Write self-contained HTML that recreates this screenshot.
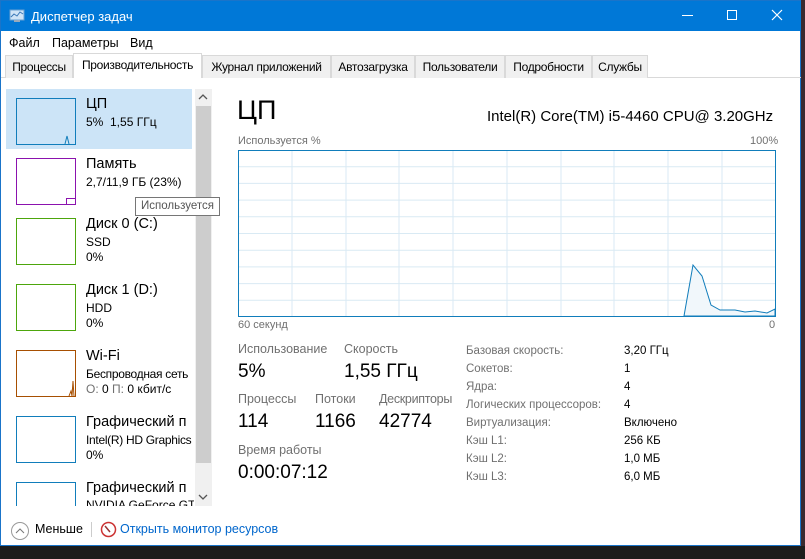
<!DOCTYPE html>
<html><head><meta charset="utf-8"><style>
*{margin:0;padding:0;box-sizing:border-box}
body{width:805px;height:559px;overflow:hidden;background:#222;font-family:"Liberation Sans",sans-serif;position:relative;color:#000}
.a{position:absolute;white-space:nowrap}
.win{position:absolute;left:0;top:0;width:801px;height:546px;background:#fff;border:1px solid #1a74c9}
.g{color:#707070}
.tab{position:absolute;top:54px;height:23px;font-size:12px;letter-spacing:-0.3px;padding:4px 0 0;text-align:center;white-space:nowrap;overflow:hidden;background:#f0f0f0;border:1px solid #d9d9d9;border-bottom:none}
.th{position:absolute;left:15px;width:60px;height:47px;border:1px solid}
.lt{font-size:14.5px}
.ls{font-size:12px}
</style></head><body>
<div class="a" style="left:801px;top:0;width:4px;height:559px;background:#3a2a30"></div>
<div class="a" style="left:0;top:546px;width:805px;height:13px;background:#1c1c1c"></div>
<div class="win">
<div class="a" style="left:0;top:0;width:800px;height:30px;background:#0078d7"></div>
<svg class="a" style="left:8px;top:7px" width="16" height="16"><rect x="1" y="2" width="14" height="10" fill="#cfe4f7" stroke="#6aa0d0"/><polyline points="2,9 5,6 8,8 11,4 14,6" fill="none" stroke="#3a78b8"/><rect x="5" y="12" width="6" height="2" fill="#9ab"/></svg>
<div class="a" style="left:30px;top:8px;font-size:13px;color:#fff">Диспетчер задач</div>
<div class="a" style="left:681px;top:14px;width:11px;height:1px;background:#fff"></div>
<div class="a" style="left:726px;top:9px;width:10px;height:10px;border:1px solid #fff"></div>
<svg class="a" style="left:770px;top:8px" width="12" height="12"><path d="M1 1L11 11M11 1L1 11" stroke="#fff" stroke-width="1.2"/></svg>
<div class="a" style="left:8px;top:35px;font-size:12.5px">Файл</div>
<div class="a" style="left:51px;top:35px;font-size:12.5px">Параметры</div>
<div class="a" style="left:129px;top:35px;font-size:12.5px">Вид</div>
<div class="a" style="left:0;top:76px;width:800px;height:1px;background:#d9d9d9"></div>
<div class="tab" style="left:4px;width:68px">Процессы</div>
<div class="tab" style="left:72px;top:52px;height:25px;width:129px;background:#fff;border-color:#d9d9d9">Производительность</div>
<div class="tab" style="left:201px;width:129px">Журнал приложений</div>
<div class="tab" style="left:330px;width:84px">Автозагрузка</div>
<div class="tab" style="left:414px;width:90px">Пользователи</div>
<div class="tab" style="left:504px;width:87px">Подробности</div>
<div class="tab" style="left:591px;width:56px">Службы</div>

<div class="a" style="left:5px;top:88px;width:186px;height:60px;background:#cce4f7"></div>
<div class="th" style="top:97px;border-color:#117dbb"><svg width="58" height="45" style="position:absolute;left:0;top:0"><polyline points="48,45 50,37 52,45" fill="#d4e8f5" stroke="#117dbb"/></svg></div>
<div class="a lt" style="left:85px;top:95px">ЦП</div>
<div class="a ls" style="left:85px;top:114px">5%&nbsp; 1,55 ГГц</div>
<div class="th" style="top:157px;border-color:#8b12ae"><div style="position:absolute;right:0;bottom:0;width:9px;height:6px;border:1px solid #8b12ae;border-right:none;border-bottom:none"></div></div>
<div class="a lt" style="left:85px;top:155px">Память</div>
<div class="a ls" style="left:85px;top:174px">2,7/11,9 ГБ (23%)</div>
<div class="th" style="top:217px;border-color:#4da60c"></div>
<div class="a lt" style="left:85px;top:215px">Диск 0 (C:)</div>
<div class="a ls" style="left:85px;top:234px">SSD</div>
<div class="a ls" style="left:85px;top:249px">0%</div>
<div class="th" style="top:283px;border-color:#4da60c"></div>
<div class="a lt" style="left:85px;top:281px">Диск 1 (D:)</div>
<div class="a ls" style="left:85px;top:300px">HDD</div>
<div class="a ls" style="left:85px;top:315px">0%</div>
<div class="th" style="top:349px;border-color:#a74f01"><svg width="58" height="45" style="position:absolute;left:0;top:0"><polyline points="52,45 54,40 55,45 56,30 57,45" fill="none" stroke="#a74f01"/></svg></div>
<div class="a lt" style="left:85px;top:347px">Wi-Fi</div>
<div class="a ls" style="left:85px;top:366px;letter-spacing:-0.3px">Беспроводная сеть</div>
<div class="a ls g" style="left:85px;top:381px">О: <span style="color:#000">0</span> П: <span style="color:#000">0 кбит/с</span></div>
<div class="th" style="top:415px;border-color:#117dbb"></div>
<div class="a lt" style="left:85px;top:413px;width:108px;overflow:hidden">Графический п</div>
<div class="a ls" style="left:85px;top:432px;width:108px;overflow:hidden;letter-spacing:-0.3px">Intel(R) HD Graphics</div>
<div class="a ls" style="left:85px;top:447px">0%</div>
<div class="th" style="top:481px;height:24px;border-bottom:none;border-color:#117dbb"></div>
<div class="a lt" style="left:85px;top:479px;width:108px;overflow:hidden">Графический п</div>
<div class="a ls" style="left:85px;top:497px;width:108px;height:8px;overflow:hidden">NVIDIA GeForce GTX</div>
<div class="a" style="left:194px;top:88px;width:17px;height:417px;background:#f0f0f0"></div>
<div class="a" style="left:195px;top:105px;width:15px;height:357px;background:#cdcdcd"></div>
<svg class="a" style="left:197px;top:92px" width="10" height="8"><path d="M1 6L5 2L9 6" fill="none" stroke="#555" stroke-width="1.3"/></svg>
<svg class="a" style="left:197px;top:492px" width="10" height="8"><path d="M1 2L5 6L9 2" fill="none" stroke="#555" stroke-width="1.3"/></svg>
<div class="a" style="left:134px;top:196px;height:19px;border:1px solid #767676;background:#fff;font-size:11.5px;padding:2px 5px;color:#555;z-index:5">Используется</div>

<div class="a" style="left:236px;top:94px;font-size:27px">ЦП</div>
<div class="a" style="left:486px;top:107px;font-size:15px">Intel(R) Core(TM) i5-4460 CPU@ 3.20GHz</div>
<div class="a g" style="left:237px;top:134px;font-size:11px">Используется %</div>
<div class="a g" style="left:749px;top:134px;font-size:11px">100%</div>
<svg class="a" style="left:237px;top:149px" width="538" height="167">
<g stroke="#d9eaf4" stroke-width="1">
<path d="M54 0V167M108 0V167M161 0V167M215 0V167M269 0V167M323 0V167M376 0V167M430 0V167M484 0V167M0 16.7H538M0 33.4H538M0 50.1H538M0 66.8H538M0 83.5H538M0 100.2H538M0 116.9H538M0 133.6H538M0 150.3H538"/>
</g>
<polygon points="446,166 455,115 464,126 473,155 482,160 497,160 507,162 517,161 529,163 537,159 537,166" fill="#f1f7fb" stroke="#117dbb" stroke-width="1"/>
<rect x="0.5" y="0.5" width="537" height="166" fill="none" stroke="#117dbb"/>
</svg>
<div class="a g" style="left:237px;top:318px;font-size:11px">60 секунд</div>
<div class="a g" style="left:768px;top:318px;font-size:11px">0</div>

<div class="a g" style="left:237px;top:341px;font-size:12.5px">Использование</div>
<div class="a" style="left:237px;top:360px;font-size:19px">5%</div>
<div class="a g" style="left:343px;top:341px;font-size:12.5px">Скорость</div>
<div class="a" style="left:343px;top:360px;font-size:19px">1,55 ГГц</div>
<div class="a g" style="left:237px;top:391px;font-size:12.5px">Процессы</div>
<div class="a" style="left:237px;top:410px;font-size:19px">114</div>
<div class="a g" style="left:314px;top:391px;font-size:12.5px">Потоки</div>
<div class="a" style="left:314px;top:410px;font-size:19px">1166</div>
<div class="a g" style="left:378px;top:391px;font-size:12.5px;letter-spacing:-0.3px">Дескрипторы</div>
<div class="a" style="left:378px;top:410px;font-size:19px">42774</div>
<div class="a g" style="left:237px;top:442px;font-size:12.5px">Время работы</div>
<div class="a" style="left:237px;top:461px;font-size:19px">0:00:07:12</div>

<div class="a g" style="left:465px;top:341px;font-size:11.5px;line-height:18px">Базовая скорость:<br>Сокетов:<br>Ядра:<br>Логических процессоров:<br>Виртуализация:<br>Кэш L1:<br>Кэш L2:<br>Кэш L3:</div>
<div class="a" style="left:623px;top:341px;font-size:11.5px;line-height:18px">3,20 ГГц<br>1<br>4<br>4<br>Включено<br>256 КБ<br>1,0 МБ<br>6,0 МБ</div>

<svg class="a" style="left:9px;top:520px" width="20" height="20"><circle cx="10" cy="10" r="8.5" fill="none" stroke="#999"/><path d="M6 12L10 8L14 12" fill="none" stroke="#777"/></svg>
<div class="a" style="left:34px;top:521px;font-size:12.5px">Меньше</div>
<div class="a" style="left:90px;top:521px;width:1px;height:15px;background:#ccc"></div>
<svg class="a" style="left:99px;top:520px" width="17" height="17"><circle cx="8.5" cy="8.5" r="7" fill="#fff" stroke="#c33" stroke-width="1.5"/><path d="M5 5L10 11" stroke="#933" stroke-width="1.5"/></svg>
<div class="a" style="left:119px;top:521px;font-size:12.5px;color:#0066cc">Открыть монитор ресурсов</div>
</div>
</body></html>
